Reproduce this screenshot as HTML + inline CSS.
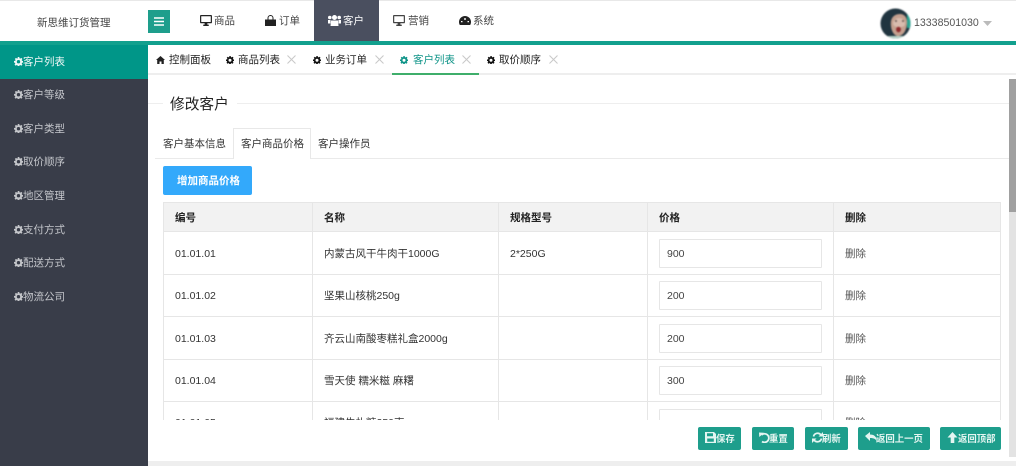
<!DOCTYPE html>
<html lang="zh">
<head>
<meta charset="utf-8">
<title>新思维订货管理</title>
<style>
html,body{margin:0;padding:0;background:#fff}
body{width:1016px;height:466px;position:relative;overflow:hidden;font-family:"Liberation Sans","Noto Sans CJK SC",sans-serif;font-size:10.5px;color:#333}
#p{left:0;top:0;width:1016px;height:466px;overflow:hidden;filter:blur(.3px)}
div,span,svg{position:absolute}
.t{white-space:nowrap;line-height:14px;height:14px}
.bar{background:#e6e6e6}
.btn{background:#1e9e8c;border-radius:2px;top:427px;height:23px}
.btn .t{top:4.5px;font-weight:bold;font-size:9.4px;color:#e4f5f1}
.btn svg{top:5px}
.side{color:#c4c6cb;left:23px;font-size:10.5px}
.sicon{left:14px;width:9px;height:9px}
.hd{font-weight:bold;color:#222}
.cell{color:#333}
.inp{left:659px;width:161px;height:27px;border:1px solid #e6e6e6;background:#fff;border-radius:1px}
.inp span{left:7px;top:7px;color:#444;line-height:14px;font-size:10.5px}
.x{width:9px;height:9px;top:55px}
</style>
</head>
<body>
<div id="p">
<svg width="0" height="0" style="left:0;top:0">
<defs>
<symbol id="cog" viewBox="0 0 16 16"><path fill="currentColor" d="M6.600 0h2.800l.4 2.200 1.300.6L13 1.500l2 2-1.300 1.900.5 1.300 2.200.4v2.800l-2.200.4-.5 1.300 1.300 1.900-2 2-1.900-1.300-1.300.5-.4 2.300H6.600l-.4-2.300-1.300-.5L3 15.500l-2-2 1.300-1.900-.5-1.300L0 9.900V7.100l2.300-.4.5-1.300L1.500 3.500l2-2 1.900 1.300 1.300-.6zM8 5.400A3 3 0 1 0 8 11.400 3 3 0 0 0 8 5.400z" fill-rule="evenodd"/></symbol>
<symbol id="mon" viewBox="0 0 13 12"><path fill="currentColor" fill-rule="evenodd" d="M1 0h11a1 1 0 0 1 1 1v7a1 1 0 0 1-1 1H8v1.500h1.500V12h-6v-1.500H5V9H1a1 1 0 0 1-1-1V1a1 1 0 0 1 1-1zm.3 1.300v6.400h10.400V1.300z"/></symbol>
<symbol id="xx" viewBox="0 0 9 9"><path d="M.5.500l8 8M8.500.500l-8 8" stroke="#c8c8c8" stroke-width="1" fill="none"/></symbol>
</defs>
</svg>

<!-- header -->
<div style="left:0;top:0;width:1016px;height:1px;background:#e8e8e8"></div>
<div style="left:0;top:41px;width:1016px;height:4px;background:#12a08e"></div>
<span class="t" style="left:37px;top:16px;color:#444">新思维订货管理</span>
<div style="left:148px;top:10px;width:22px;height:23px;background:#1e9e8c"></div>
<svg style="left:154px;top:17px" width="10" height="9" viewBox="0 0 10 9"><path d="M0 1h10M0 4.500h10M0 8h10" stroke="#fff" stroke-width="1.500"/></svg>

<svg style="left:200px;top:15px;color:#222" width="12" height="11"><use href="#mon"/></svg>
<span class="t" style="left:214px;top:13.500px;color:#444">商品</span>
<svg style="left:265px;top:15px" width="11" height="11" viewBox="0 0 11 11"><path fill="#222" d="M0 4.500h11V11H0z"/><path d="M3 5V3a2.500 2.500 0 0 1 5 0v2" fill="none" stroke="#222" stroke-width="1"/></svg>
<span class="t" style="left:279px;top:13.500px;color:#444">订单</span>
<div style="left:314px;top:0;width:65px;height:41px;background:#4a4f5f"></div>
<svg style="left:328px;top:15px" width="13" height="11" viewBox="0 0 13 11"><circle cx="6.500" cy="2.500" r="2.500" fill="#fff"/><circle cx="1.800" cy="2.500" r="1.800" fill="#fff"/><circle cx="11.200" cy="2.500" r="1.800" fill="#fff"/><path fill="#fff" d="M3 5.500h7l.5 5.500h-8zM0 5h2.500v3.500H0zM10.500 5H13v3.500h-2.500z"/></svg>
<span class="t" style="left:343px;top:13.500px;color:#fff">客户</span>
<svg style="left:393px;top:15px;color:#444" width="12" height="11"><use href="#mon"/></svg>
<span class="t" style="left:408px;top:13.500px;color:#444">营销</span>
<svg style="left:459px;top:16px" width="12" height="9" viewBox="0 0 12 9"><path fill="#222" fill-rule="evenodd" d="M6 0a6 6 0 0 1 6 6c0 1.200-.3 2-.8 3H.8C.3 8 0 7.200 0 6a6 6 0 0 1 6-6zM5.300 2v2h1.400V2zM2 5v1.200h1.500V5zM8.500 5v1.200H10V5z"/></svg>
<span class="t" style="left:473px;top:13.500px;color:#444">系统</span>

<!-- avatar -->
<svg style="left:880px;top:8px;filter:blur(.7px)" width="31" height="31" viewBox="0 0 31 31">
<defs><clipPath id="av"><circle cx="15.500" cy="15.500" r="15"/></clipPath></defs>
<g clip-path="url(#av)">
<rect width="31" height="31" fill="#20343f"/>
<rect x="27" y="6" width="4" height="14" fill="#2aa592"/>
<path d="M11 13c1-5 5-7 9-7 4 0 7 3 7 8 0 7-3 14-9 14-5 0-8-8-7-15z" fill="#c4a08f"/>
<path d="M19 10c3 0 6 2 6 5s-1 4-6 4-6-2-6-4 3-5 6-5z" fill="#d8bcae"/>
<ellipse cx="18.500" cy="21.500" rx="2.400" ry="2.800" fill="#8f2a2c"/>
<path d="M6 28h20l2 3H4z" fill="#b6d3c8"/>
<circle cx="16" cy="13" r=".9" fill="#4a3a36"/><circle cx="23" cy="13" r=".9" fill="#4a3a36"/>
</g>
</svg>
<span class="t" style="left:914px;top:16px;color:#555;font-size:10.600px">13338501030</span>
<svg style="left:983px;top:21px" width="9" height="5" viewBox="0 0 9 5"><path d="M0 0h9L4.500 5z" fill="#bbb"/></svg>

<!-- sidebar -->
<div style="left:0;top:45px;width:148px;height:421px;background:#393d49"></div>
<div style="left:0;top:45px;width:148px;height:34px;background:#009688"></div>
<svg class="sicon" style="top:57px;color:#f0f8f7"><use href="#cog"/></svg><span class="t side" style="top:55px;color:#f0f8f7">客户列表</span>
<svg class="sicon" style="top:90px;color:#c4c6ca"><use href="#cog"/></svg><span class="t side" style="top:88px">客户等级</span>
<svg class="sicon" style="top:124px;color:#c4c6ca"><use href="#cog"/></svg><span class="t side" style="top:122px">客户类型</span>
<svg class="sicon" style="top:157px;color:#c4c6ca"><use href="#cog"/></svg><span class="t side" style="top:155px">取价顺序</span>
<svg class="sicon" style="top:191px;color:#c4c6ca"><use href="#cog"/></svg><span class="t side" style="top:189px">地区管理</span>
<svg class="sicon" style="top:225px;color:#c4c6ca"><use href="#cog"/></svg><span class="t side" style="top:223px">支付方式</span>
<svg class="sicon" style="top:258px;color:#c4c6ca"><use href="#cog"/></svg><span class="t side" style="top:256px">配送方式</span>
<svg class="sicon" style="top:292px;color:#c4c6ca"><use href="#cog"/></svg><span class="t side" style="top:290px">物流公司</span>

<!-- page tabs -->
<div class="bar" style="left:148px;top:73px;width:868px;height:2px;background:#eeeeee"></div>
<div style="left:392px;top:73px;width:87px;height:2px;background:#3fae6b"></div>
<svg style="left:156px;top:56px" width="9" height="8" viewBox="0 0 9 8"><path fill="#222" d="M4.500 0L9 4H7.800v4H5.500V5.500h-2V8H1.200V4H0z"/></svg>
<span class="t" style="left:169px;top:53px;color:#222">控制面板</span>
<svg style="left:226px;top:56px;width:8px;height:8px;color:#111"><use href="#cog"/></svg>
<span class="t" style="left:238px;top:53px;color:#222">商品列表</span>
<svg class="x" style="left:287px"><use href="#xx"/></svg>
<svg style="left:313px;top:56px;width:8px;height:8px;color:#111"><use href="#cog"/></svg>
<span class="t" style="left:325px;top:53px;color:#222">业务订单</span>
<svg class="x" style="left:375px"><use href="#xx"/></svg>
<svg style="left:400px;top:56px;width:8px;height:8px;color:#0f9488"><use href="#cog"/></svg>
<span class="t" style="left:413px;top:53px;color:#0f9488">客户列表</span>
<svg class="x" style="left:462px"><use href="#xx"/></svg>
<svg style="left:487px;top:56px;width:8px;height:8px;color:#111"><use href="#cog"/></svg>
<span class="t" style="left:499px;top:53px;color:#222">取价顺序</span>
<svg class="x" style="left:549px"><use href="#xx"/></svg>

<!-- fieldset title -->
<div style="left:148px;top:103px;width:15px;height:1px;background:#eee"></div>
<div style="left:237px;top:103px;width:772px;height:1px;background:#eee"></div>
<span class="t" style="left:170px;top:97px;font-size:14.700px;height:17px;line-height:17px;color:#222">修改客户</span>

<!-- content tabs -->
<div style="left:155px;top:158px;width:854px;height:1px;background:#eaeaea"></div>
<div style="left:233px;top:128px;width:76px;height:30px;background:#fff;border:1px solid #e8e8e8;border-bottom:0"></div>
<span class="t" style="left:163px;top:136.500px;color:#333">客户基本信息</span>
<span class="t" style="left:241px;top:136.500px;color:#333">客户商品价格</span>
<span class="t" style="left:318px;top:136.500px;color:#333">客户操作员</span>

<div style="left:163px;top:166px;width:89px;height:29px;background:#33a9fb;border-radius:2px"></div>
<span class="t" style="left:177px;top:173.500px;color:#fff;font-weight:bold">增加商品价格</span>

<!-- table -->
<div style="left:163px;top:202px;width:838px;height:218px;overflow:hidden;background:#fff">
  <div style="left:0;top:0;width:838px;height:30px;background:#f2f2f2"></div>
  <div class="bar" style="left:0;top:0;width:838px;height:1px"></div>
  <div class="bar" style="left:0;top:29px;width:838px;height:1px"></div>
  <div class="bar" style="left:0;top:72px;width:838px;height:1px"></div>
  <div class="bar" style="left:0;top:114px;width:838px;height:1px"></div>
  <div class="bar" style="left:0;top:157px;width:838px;height:1px"></div>
  <div class="bar" style="left:0;top:199px;width:838px;height:1px"></div>
  <div class="bar" style="left:0;top:0;width:1px;height:218px"></div>
  <div class="bar" style="left:149px;top:0;width:1px;height:218px"></div>
  <div class="bar" style="left:335px;top:0;width:1px;height:218px"></div>
  <div class="bar" style="left:484px;top:0;width:1px;height:218px"></div>
  <div class="bar" style="left:670px;top:0;width:1px;height:218px"></div>
  <div class="bar" style="left:837px;top:0;width:1px;height:218px"></div>

  <span class="t hd" style="left:12px;top:9px">编号</span>
  <span class="t hd" style="left:161px;top:9px">名称</span>
  <span class="t hd" style="left:347px;top:9px">规格型号</span>
  <span class="t hd" style="left:496px;top:9px">价格</span>
  <span class="t hd" style="left:682px;top:9px">删除</span>

  <span class="t cell" style="left:12px;top:45px">01.01.01</span>
  <span class="t cell" style="left:161px;top:45px">内蒙古风干牛肉干1000G</span>
  <span class="t cell" style="left:347px;top:45px">2*250G</span>
  <div class="inp" style="left:496px;top:37px"><span>900</span></div>
  <span class="t" style="left:682px;top:45px;color:#555">删除</span>

  <span class="t cell" style="left:12px;top:87px">01.01.02</span>
  <span class="t cell" style="left:161px;top:87px">坚果山核桃250g</span>
  <div class="inp" style="left:496px;top:79px"><span>200</span></div>
  <span class="t" style="left:682px;top:87px;color:#555">删除</span>

  <span class="t cell" style="left:12px;top:130px">01.01.03</span>
  <span class="t cell" style="left:161px;top:130px">齐云山南酸枣糕礼盒2000g</span>
  <div class="inp" style="left:496px;top:122px"><span>200</span></div>
  <span class="t" style="left:682px;top:130px;color:#555">删除</span>

  <span class="t cell" style="left:12px;top:172px">01.01.04</span>
  <span class="t cell" style="left:161px;top:172px">雪天使 糯米糍 麻糬</span>
  <div class="inp" style="left:496px;top:164px"><span>300</span></div>
  <span class="t" style="left:682px;top:172px;color:#555">删除</span>

  <span class="t cell" style="left:12px;top:214px">01.01.05</span>
  <span class="t cell" style="left:161px;top:214px">福建牛扎糖250克</span>
  <div class="inp" style="left:496px;top:207px"><span>200</span></div>
  <span class="t" style="left:682px;top:214px;color:#555">删除</span>
</div>

<!-- scrollbar -->
<div style="left:1009px;top:79px;width:7px;height:378px;background:#e3e3e3"></div>
<div style="left:1009px;top:79px;width:7px;height:133px;background:#a0a0a0"></div>

<!-- footer buttons -->
<div class="btn" style="left:698px;width:43px">
  <svg style="left:7px" width="11" height="11" viewBox="0 0 11 11"><path fill="#e4f5f1" fill-rule="evenodd" d="M0 0h9l2 2v9H0zM2 1.300v3h6v-3zM2.200 6.500v3.200h6.600V6.500z"/></svg>
  <span class="t" style="left:18px">保存</span>
</div>
<div class="btn" style="left:752px;width:42px">
  <svg style="left:7px" width="11" height="11" viewBox="0 0 11 11"><path d="M2.500 3A4.300 4.300 0 1 1 3 9.500" fill="none" stroke="#e4f5f1" stroke-width="1.800"/><path d="M0 .500l5 .3-4.700 4.200z" fill="#e4f5f1"/></svg>
  <span class="t" style="left:17px">重置</span>
</div>
<div class="btn" style="left:805px;width:43px">
  <svg style="left:7px" width="11" height="11" viewBox="0 0 11 11"><path d="M1.500 4.500A4.200 4.200 0 0 1 9 3M9.500 6.500A4.200 4.200 0 0 1 2 8" fill="none" stroke="#e4f5f1" stroke-width="1.700"/><path d="M11 0v4.500H6.500zM0 11V6.500h4.500z" fill="#e4f5f1"/></svg>
  <span class="t" style="left:17px">刷新</span>
</div>
<div class="btn" style="left:858px;width:72px">
  <svg style="left:7px" width="12" height="10" viewBox="0 0 12 10"><path fill="#e4f5f1" d="M5 0v2.500c4 0 7 2 7 7.500-1-3-3-4-7-4v3L0 4z"/></svg>
  <span class="t" style="left:18px">返回上一页</span>
</div>
<div class="btn" style="left:940px;width:61px">
  <svg style="left:7px" width="11" height="11" viewBox="0 0 10 11"><path fill="#e4f5f1" d="M5 0l5 5.500H6.800V11H3.200V5.500H0z"/></svg>
  <span class="t" style="left:18px">返回顶部</span>
</div>

<!-- bottom strip -->
<div style="left:148px;top:461px;width:868px;height:5px;background:#eeeeee"></div>
</div>
</body>
</html>
